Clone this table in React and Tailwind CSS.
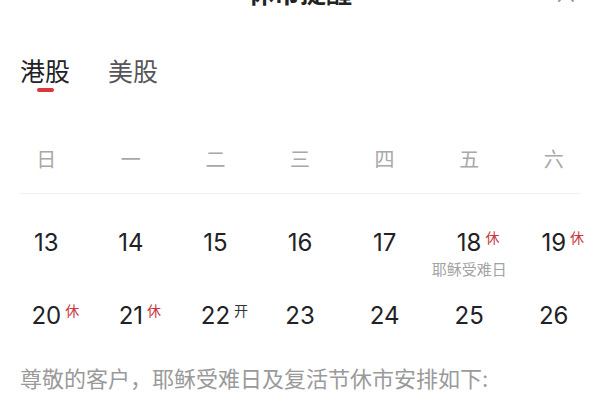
import React from 'react';

const WEEKDAYS = ['日', '一', '二', '三', '四', '五', '六'];

const WEEKS = [
    [
        { day: 13 },
        { day: 14 },
        { day: 15 },
        { day: 16 },
        { day: 17 },
        { day: 18, tag: '休', note: '耶稣受难日' },
        { day: 19, tag: '休' },
    ],
    [
        { day: 20, tag: '休' },
        { day: 21, tag: '休' },
        { day: 22, tag: '开', open: true },
        { day: 23 },
        { day: 24 },
        { day: 25 },
        { day: 26 },
    ],
];

const FONT = { fontFamily: 'Inter, "Noto Sans CJK SC", "Noto Sans", sans-serif' };

const DayCell = ({ day, tag, note, open }) => (
    <div className="flex flex-col items-center">
        <div className="relative h-[32px] leading-[32px] text-[24px] text-[#222226]">
            {day}
            {tag && (
                <span
                    className={`absolute left-full top-[1px] ml-[4px] text-[14px] leading-[20px] ${open ? 'text-[#333]' : 'text-[#c9363e]'}`}
                >
                    {tag}
                </span>
            )}
        </div>
        {note && <div className="mt-[2px] text-[15px] leading-[18px] whitespace-nowrap text-[#a3a3a3]">{note}</div>}
    </div>
);

export default function App() {
    return (
        <div className="w-[600px] h-[400px] overflow-hidden bg-white" style={FONT}>
            {/* Header (scrolled partly out of view) */}
            <div className="-mt-[24px] h-[36px] grid grid-cols-[1fr_auto_1fr] items-center px-[20px]">
                <div />
                <div className="text-[26px] font-bold text-[#222] leading-[36px]">休市提醒</div>
                <div className="flex justify-end pr-[4px]">
                    <svg width="20" height="20" viewBox="0 0 20 20" fill="none" stroke="#999" strokeWidth="1.8" strokeLinecap="round">
                        <path d="M3 3l14 14M17 3L3 17" />
                    </svg>
                </div>
            </div>

            {/* Tabs */}
            <div className="mt-[45px] flex gap-[38px] px-[20px]">
                <div className="flex flex-col items-center">
                    <span className="text-[25px] leading-[30px] text-[#222226]">港股</span>
                    <span className="mt-[1px] w-[17px] h-[4px] rounded-full bg-[#d9363e]" />
                </div>
                <span className="text-[25px] leading-[30px] text-[#55555a]">美股</span>
            </div>

            {/* Weekdays */}
            <div className="mt-[48px] grid grid-cols-7 px-[4px]">
                {WEEKDAYS.map(w => (
                    <div key={w} className="h-[40px] leading-[40px] text-center text-[20px] text-[#a8a8a8]">{w}</div>
                ))}
            </div>
            <div className="mt-[13px] mx-[20px] h-px bg-[#f0f0f0]" />

            {/* Calendar */}
            <div className="mt-[33px] px-[4px]">
                {WEEKS.map((week, i) => (
                    <div key={i} className="grid grid-cols-7 h-[73px]">
                        {week.map(d => <DayCell key={d.day} {...d} />)}
                    </div>
                ))}
            </div>

            <p className="-mt-[9px] px-[20px] text-[22px] leading-[30px] text-[#9a9a9a]">
                尊敬的客户，耶稣受难日及复活节休市安排如下:
            </p>
        </div>
    );
}
